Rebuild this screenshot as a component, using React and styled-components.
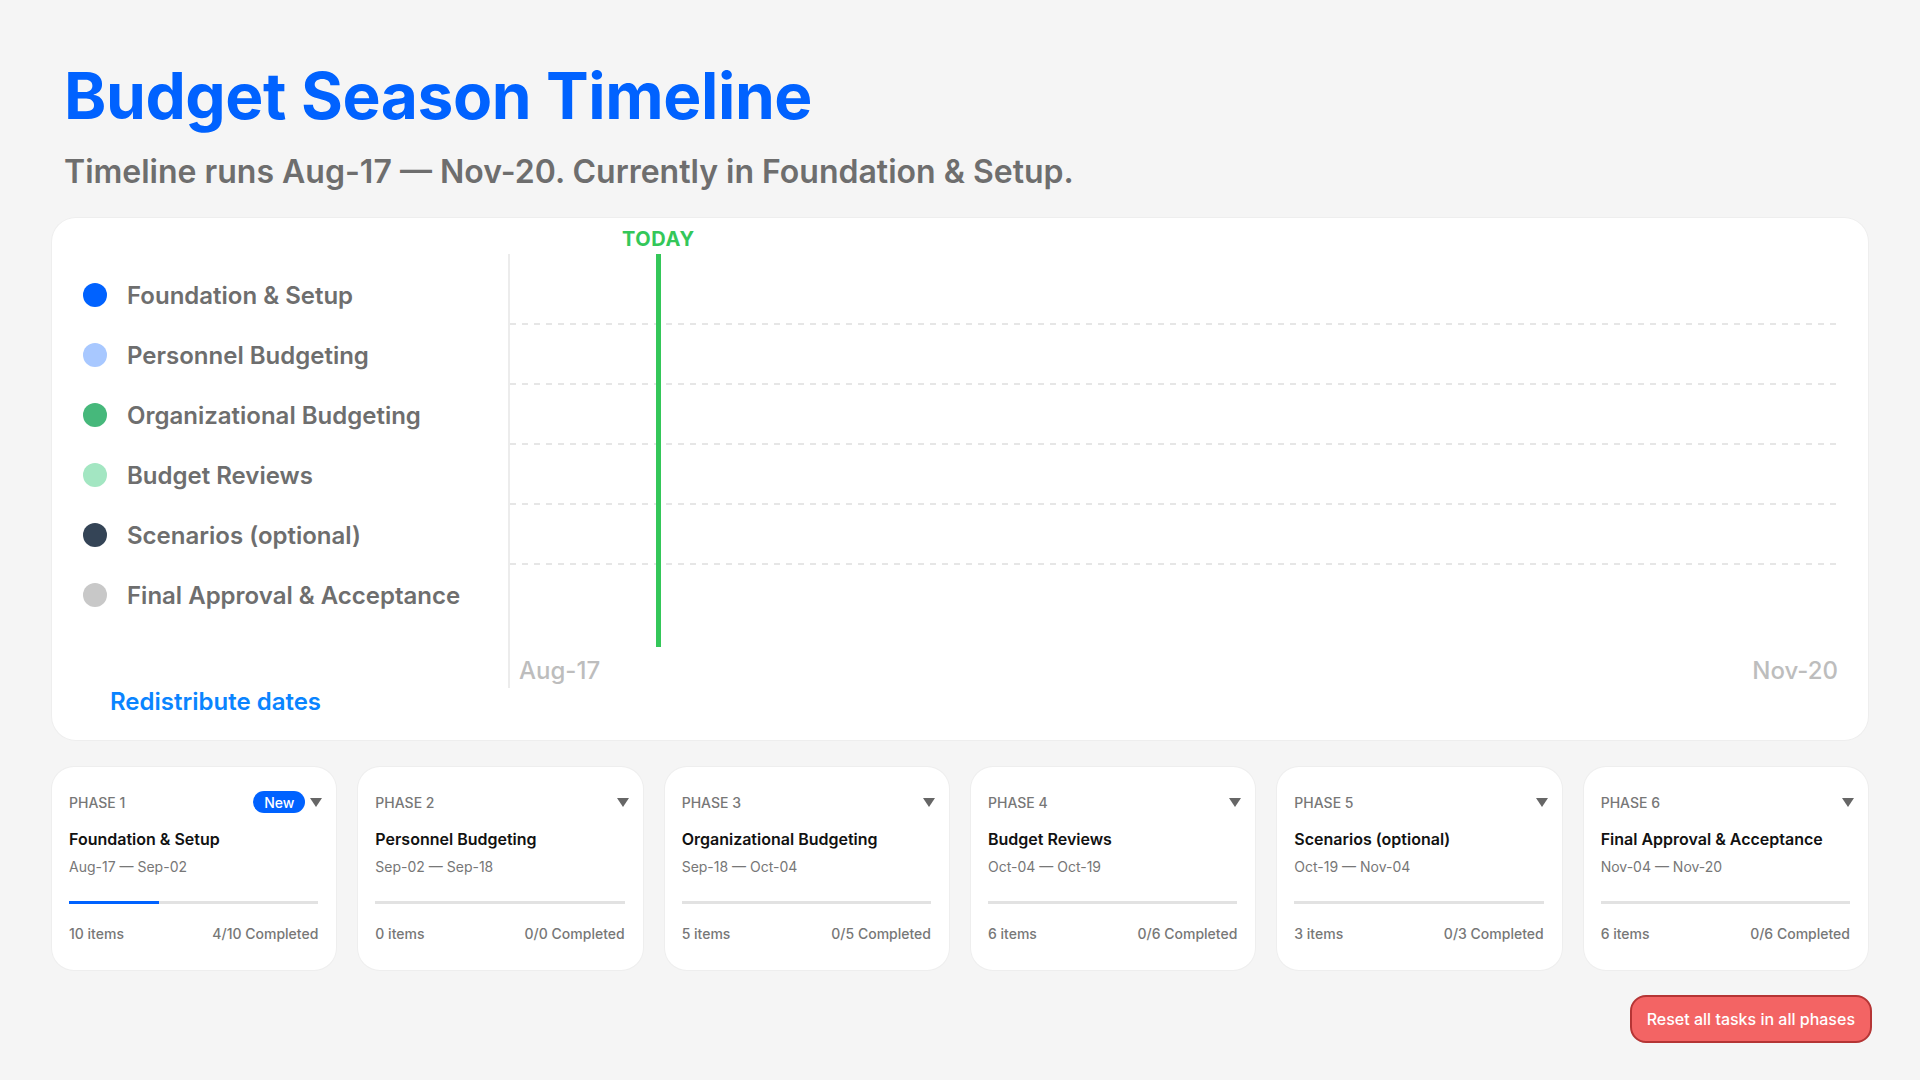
import React from "react";
import styled, { createGlobalStyle } from "styled-components";

const GlobalStyle = createGlobalStyle`
  * { box-sizing: border-box; }
  html, body { margin: 0; padding: 0; background: #f5f5f5; }
  body { font-family: Inter, "Noto Sans", "Liberation Sans", sans-serif; }
`;

const PHASES = [
  { name: "Foundation & Setup", color: "#0062ff", start: "Aug-17", end: "Sep-02", items: 10, done: 4, isNew: true, progress: 36 },
  { name: "Personnel Budgeting", color: "#a8c8ff", start: "Sep-02", end: "Sep-18", items: 0, done: 0 },
  { name: "Organizational Budgeting", color: "#46b87b", start: "Sep-18", end: "Oct-04", items: 5, done: 0 },
  { name: "Budget Reviews", color: "#a3e6c2", start: "Oct-04", end: "Oct-19", items: 6, done: 0 },
  { name: "Scenarios (optional)", color: "#344456", start: "Oct-19", end: "Nov-04", items: 3, done: 0 },
  { name: "Final Approval & Acceptance", color: "#c8c8c8", start: "Nov-04", end: "Nov-20", items: 6, done: 0 },
];

const RANGE_START = new Date(2025, 7, 17);
const RANGE_END = new Date(2025, 10, 20);
const TODAY = new Date(2025, 7, 27, 15);

const Page = styled.div`
  padding: 58px 52px 40px;
  min-height: 100vh;
`;

const Header = styled.header`
  padding-left: 12px;
  margin-bottom: 27px;
`;

const Title = styled.h1`
  margin: 0 0 18px;
  font-size: 64px;
  line-height: 1.2;
  font-weight: 700;
  color: #0062ff;
  letter-spacing: -0.4px;
`;

const Subtitle = styled.p`
  margin: 0;
  font-size: 32px;
  line-height: 1.2;
  font-weight: 600;
  color: #6e6e6e;
`;

const TimelineCard = styled.section`
  display: grid;
  grid-template-columns: 425px 1fr;
  align-items: start;
  background: #fff;
  border-radius: 24px;
  box-shadow: 0 0 0 1px #eeeeee;
  padding: 36px 32px 24px 31px;
  margin-bottom: 27px;
`;

const Legend = styled.div`
  display: flex;
  flex-direction: column;
  padding-top: 11px;
`;

const LegendRow = styled.div`
  display: flex;
  align-items: center;
  gap: 20px;
  height: 60px;
`;

const Dot = styled.span`
  width: 24px;
  height: 24px;
  border-radius: 50%;
  flex: none;
  background: ${(p) => p.$color};
`;

const LegendLabel = styled.span`
  font-size: 24px;
  font-weight: 600;
  color: #6e6e6e;
`;

const LinkButton = styled.button`
  align-self: flex-start;
  margin: 62px 0 0 27px;
  padding: 0;
  border: none;
  background: none;
  font-family: inherit;
  font-size: 24px;
  line-height: 29px;
  font-weight: 600;
  color: #0a84ff;
  cursor: pointer;
`;

const Chart = styled.div`
  position: relative;
  border-left: 2px solid #ececec;
  padding: 9px 0 3px;
`;

const Lane = styled.div`
  height: 60px;
  background-image: ${(p) =>
    p.$first
      ? "none"
      : "repeating-linear-gradient(90deg, #e6e6e6 0 6px, transparent 6px 12px)"};
  background-size: 100% 2px;
  background-repeat: no-repeat;
  background-position: 0 0;
`;

const Axis = styled.div`
  display: flex;
  justify-content: space-between;
  margin: 33px -2px 0 0;
  padding-left: 9px;
  font-size: 24px;
  line-height: 29px;
  font-weight: 500;
  color: #bdbdbd;
`;

const TodayLine = styled.div`
  position: absolute;
  top: 0;
  height: 393px;
  width: 5px;
  margin-left: -2.5px;
  background: #34c759;
`;

const TodayLabel = styled.span`
  position: absolute;
  top: -27px;
  left: 50%;
  transform: translateX(-50%);
  font-size: 20px;
  line-height: 24px;
  font-weight: 700;
  letter-spacing: 0.6px;
  color: #34c759;
`;

const PhaseGrid = styled.div`
  display: grid;
  grid-template-columns: repeat(6, 1fr);
  gap: 22px;
  margin-bottom: 25px;
`;

const PhaseCard = styled.article`
  background: #fff;
  border-radius: 22px;
  box-shadow: 0 0 0 1px #eeeeee;
  padding: 24px 18px 26px 17px;
  height: 203px;
`;

const PhaseHead = styled.div`
  display: flex;
  align-items: center;
  height: 22px;
  margin-bottom: 16px;
`;

const PhaseNo = styled.span`
  font-size: 14px;
  font-weight: 500;
  color: #777;
  margin-right: auto;
`;

const Badge = styled.span`
  display: inline-flex;
  align-items: center;
  height: 22px;
  padding: 0 11px;
  border-radius: 11px;
  background: #0062ff;
  color: #fff;
  font-size: 14px;
  font-weight: 500;
  margin-right: 5px;
`;

const Caret = styled.span`
  width: 0;
  height: 0;
  margin-right: -4px;
  border-left: 6px solid transparent;
  border-right: 6px solid transparent;
  border-top: 9px solid #666;
`;

const PhaseTitle = styled.h3`
  margin: 0 0 9px;
  font-size: 16px;
  line-height: 20px;
  font-weight: 600;
  color: #111;
`;

const PhaseDates = styled.div`
  font-size: 14px;
  line-height: 18px;
  color: #777;
  margin-bottom: 25px;
`;

const Track = styled.div`
  height: 3px;
  background: #e2e2e2;
  margin-bottom: 21px;
`;

const Fill = styled.div`
  height: 100%;
  background: #0062ff;
`;

const PhaseFoot = styled.div`
  display: flex;
  justify-content: space-between;
  font-size: 14px;
  line-height: 18px;
  font-weight: 500;
  color: #777;
`;

const Actions = styled.div`
  display: flex;
  justify-content: flex-end;
`;

const ResetButton = styled.button`
  height: 48px;
  padding: 0 15px;
  margin-right: -4px;
  border: 2px solid #b53535;
  border-radius: 16px;
  background: #f36464;
  color: #fff;
  font-family: inherit;
  font-size: 16px;
  font-weight: 500;
  cursor: pointer;
`;

export default function App() {
  const todayPct =
    ((TODAY - RANGE_START) / (RANGE_END - RANGE_START)) * 100;

  return (
    <>
      <GlobalStyle />
      <Page>
        <Header>
          <Title>Budget Season Timeline</Title>
          <Subtitle>
            Timeline runs Aug-17 — Nov-20. Currently in Foundation &amp; Setup.
          </Subtitle>
        </Header>

        <TimelineCard>
          <Legend>
            {PHASES.map((p) => (
              <LegendRow key={p.name}>
                <Dot $color={p.color} />
                <LegendLabel>{p.name}</LegendLabel>
              </LegendRow>
            ))}
            <LinkButton type="button">Redistribute dates</LinkButton>
          </Legend>

          <Chart>
            {PHASES.map((p, i) => (
              <Lane key={p.name} $first={i === 0} />
            ))}
            <Axis>
              <span>Aug-17</span>
              <span>Nov-20</span>
            </Axis>
            <TodayLine style={{ left: `${todayPct}%` }}>
              <TodayLabel>TODAY</TodayLabel>
            </TodayLine>
          </Chart>
        </TimelineCard>

        <PhaseGrid>
          {PHASES.map((p, i) => (
            <PhaseCard key={p.name}>
              <PhaseHead>
                <PhaseNo>PHASE {i + 1}</PhaseNo>
                {p.isNew && <Badge>New</Badge>}
                <Caret />
              </PhaseHead>
              <PhaseTitle>{p.name}</PhaseTitle>
              <PhaseDates>
                {p.start} — {p.end}
              </PhaseDates>
              <Track>
                <Fill style={{ width: `${p.progress || 0}%` }} />
              </Track>
              <PhaseFoot>
                <span>{p.items} items</span>
                <span>
                  {p.done}/{p.items} Completed
                </span>
              </PhaseFoot>
            </PhaseCard>
          ))}
        </PhaseGrid>

        <Actions>
          <ResetButton type="button">Reset all tasks in all phases</ResetButton>
        </Actions>
      </Page>
    </>
  );
}
